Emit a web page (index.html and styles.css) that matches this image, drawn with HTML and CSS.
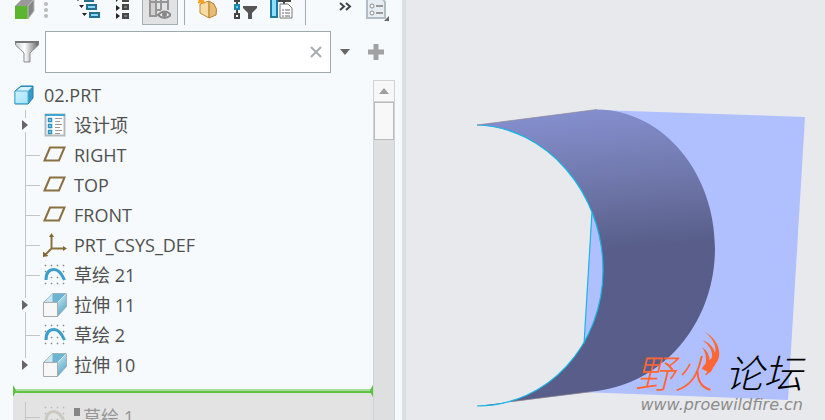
FILE: index.html
```html
<!DOCTYPE html>
<html lang="zh-CN">
<head>
<meta charset="utf-8">
<title>02.PRT</title>
<link rel="stylesheet" href="styles.css">
</head>
<body>
<svg class="defs" aria-hidden="true">
  <defs>
    <linearGradient id="ice" x1="0" y1="0" x2="1" y2="1"><stop offset="0" stop-color="#cdf1ff"/><stop offset="1" stop-color="#a5e4fd"/></linearGradient>
    <linearGradient id="glass" x1="0" y1="0" x2="1" y2="1"><stop offset="0" stop-color="#4ba3c8"/><stop offset=".5" stop-color="#a9d6e8"/><stop offset="1" stop-color="#4299c0"/></linearGradient>
    <linearGradient id="steel" x1="0" x2="1"><stop offset="0" stop-color="#ccc"/><stop offset=".4" stop-color="#fff"/><stop offset="1" stop-color="#666"/></linearGradient>
    <symbol id="plane" viewBox="0 0 24 24"><path d="M1.500 17.500L7 4.500H21.500L16 17.500Z" fill="none" stroke="#8a7040" stroke-width="2"/></symbol>
    <symbol id="sketch" viewBox="0 0 24 24">
      <g fill="currentColor"><path d="M2 2h1v1H2zM8 2h1v1H8zM14 2h1v1h-1zM20 2h1v1h-1zM2 8h1v1H2zM20 8h1v1h-1zM8 14h1v1H8zM14 14h1v1h-1zM2 20h1v1H2zM8 20h1v1H8zM14 20h1v1h-1zM20 20h1v1h-1z" stroke="currentColor" stroke-width=".6"/></g>
      <path class="curve" d="M3 17C3 9 7 6.500 11 6.500S18 9 21.500 17" fill="none" stroke-width="3"/>
    </symbol>
    <symbol id="extrude" viewBox="0 0 24 24">
      <path d="M.500 9.500L9.500.500H23.500V13.500L14.500 23.500Z" fill="url(#glass)" stroke="#9bb3bd"/>
      <path d="M9.500 1L23 1L14.500 9.500H2Z" fill="#6bb4d2"/>
      <path d="M1 9.500L9.500.500V9.500Z" fill="#c9e6f1"/>
      <path d="M14.500 9.500L23.500.500" stroke="#d6e9f0" fill="none"/>
      <path d="M.500 9.500H14.500V23.500H.500Z" fill="#f7f7f7" stroke="#aaa"/>
    </symbol>
  </defs>
</svg>
<div class="app">
  <aside class="panel">
    <div class="toolbar">
      <div class="group">
        <button class="tool" aria-label="模型"><svg width="22" height="20"><path d="M1 6L8-1H20L14 6Z" fill="#999"/><path d="M14 6L20-1V11L14 19Z" fill="#858585"/><path d="M1 6H14V19H1Z" fill="#5cb531"/><path d="M14 6L20-1V11L14 19Z" fill="none" stroke="#bbb"/></svg></button>
        <svg class="grip" width="4" height="20"><g fill="#b9bbbc"><circle cx="2" cy="4" r="2"/><circle cx="2" cy="10" r="2"/><circle cx="2" cy="16" r="2"/></g></svg>
      </div>
      <div class="group tree-tools">
        <button class="tool" aria-label="展开"><svg width="32" height="20"><path d="M0-1h4L2 1zM3 5h5L5.500 8zM6 13h5L8.500 16z" fill="#222"/><g fill="#84d8f7" stroke="#256f91" stroke-width="2"><path d="M9-4h8v5H9zM11 5h9v4h-9zM14 13h9v4h-9z"/></g></svg></button>
        <button class="tool" aria-label="折叠"><svg width="18" height="20"><path d="M0-1h3L0 2zM0 5l4 3-4 3zM0 13l4 3-4 3z" fill="#222"/><g fill="#777" stroke="#484848" stroke-width="2"><path d="M7-3h5v4H7zM7 5h5v4H7zM7 14h5v4H7z"/></g></svg></button>
        <button class="tool pressed" aria-label="树列" aria-pressed="true"><svg width="22" height="20"><path d="M1-2V16H7V-2M7 2H1M12-2V10M19-2V10M7 2H19M7 10H12" fill="#d1d1d1" stroke="#969696" stroke-width="2"/><path d="M9 15Q15.500 8 22 15Q15.500 21 9 15Z" fill="#eee" stroke="#888" stroke-width="2"/><circle cx="15.500" cy="14.500" r="2.500" fill="#888"/></svg></button>
      </div>
      <div class="group ruled">
        <button class="tool" aria-label="新建"><svg width="28" height="20"><path d="M2 4L11 1V18L2 13Z" fill="#f7dba5" stroke="#c28b31"/><path d="M11 1L16 4Q20 9 18 15L11 18Z" fill="#e6bd73" stroke="#b98432"/><path d="M4-2V3M0 3L8-2M0-1L7 3" stroke="#ff9d13" stroke-width="2"/></svg></button>
        <button class="tool" aria-label="树过滤器"><svg width="28" height="20"><path d="M3-2V18" stroke="#444" stroke-width="2"/><path d="M1-3h4v4H1zM1 14h4v4H1z" fill="#fff" stroke="#444" stroke-width="2"/><path d="M1 5h4v4H1z" fill="#66ccf2" stroke="#1786b2" stroke-width="2"/><path d="M9 6H23V8L18 13V19H14V13L9 8Z" fill="#555"/></svg></button>
        <button class="tool" aria-label="列显示"><svg width="28" height="20"><path d="M1-2h6v19H1z" fill="#8cdefa" stroke="#217a9f" stroke-width="2"/><path d="M8 1H20V-2M14-2V4" fill="none" stroke="#444" stroke-width="2"/><path d="M10 4H18L22 8V18H10Z" fill="#fff" stroke="#777"/><path d="M12 10h2M15 10h5M12 13h2M15 13h5M12 16h2M15 16h5" stroke="#666"/></svg></button>
      </div>
      <button class="tool more" aria-label="更多"><svg width="16" height="20"><path d="M2 3L6 6.500L2 10M8 3L12 6.500L8 10" fill="none" stroke="#444" stroke-width="2"/></svg></button>
      <button class="tool settings" aria-label="设置"><svg width="26" height="20"><path d="M1-2H16L19 2V18H1Z" fill="#e6eef3" stroke="#b2bdc3" stroke-width="2"/><g fill="#fff" stroke="#888"><circle cx="6" cy="6" r="2"/><circle cx="6" cy="13" r="2"/></g><path d="M10 6h7M10 13h7" stroke="#999" stroke-width="2"/></svg><svg class="corner" width="5" height="5"><path d="M5 0V5H0Z" fill="#666"/></svg></button>
    </div>
    <form class="filter">
      <svg class="funnel" width="24" height="22"><path d="M.500 1V4L9 12V21H15V12L23.500 4V1Z" fill="url(#steel)" stroke="#8a8a8a"/><path d="M0 1H24" stroke="#777" stroke-width="2"/></svg>
      <div class="field">
        <input type="text" aria-label="过滤">
        <button type="button" class="tool" aria-label="清除"><svg width="12" height="12"><path d="M1 1L11 11M11 1L1 11" stroke="#a9abac" stroke-width="2"/></svg></button>
      </div>
      <button type="button" class="tool drop" aria-label="选项"><svg width="10" height="6"><path d="M0 0H10L5 6Z" fill="#666"/></svg></button>
      <button type="button" class="tool" aria-label="添加"><svg width="18" height="18"><path d="M9 1V17M1 9H17" stroke="#a0a2a3" stroke-width="5"/></svg></button>
    </form>
    <div class="browser">
      <div class="tree">
        <div class="root"><svg width="20" height="20"><path d="M1 6L7 1H19V13L14 19H1Z" fill="#3a9ac6" stroke="#1e7fae"/><path d="M2 6L7 2H18L14 6Z" fill="#d9f4ff"/><path d="M1 6H14V18.500H1Z" fill="url(#ice)" stroke="#48b0dc"/></svg><span>02.PRT</span></div>
        <ul class="nodes">
          <li><button class="branch open" aria-label="展开设计项"></button><svg class="icon" viewBox="0 0 24 24"><path d="M2.500 1.500h19v21h-19z" fill="#fff" stroke="#b5b9bb" stroke-width="2"/><path d="M2 2h20" stroke="#3ba8d0" stroke-width="2"/><path d="M5.500 5.500h3v3h-3zM5.500 11.500h3v3h-3zM5.500 17.500h3v3h-3z" fill="#b5e7fa" stroke="#2a93bd" stroke-width="1.500"/><path d="M12 5.500h7M12 8.500h5M12 11.500h7M12 14.500h5M12 17.500h7M12 20.500h5" stroke="#999"/></svg><span>设计项</span></li>
          <li><i class="branch"></i><svg class="icon"><use href="#plane"/></svg><span>RIGHT</span></li>
          <li><i class="branch"></i><svg class="icon"><use href="#plane"/></svg><span>TOP</span></li>
          <li><i class="branch"></i><svg class="icon"><use href="#plane"/></svg><span>FRONT</span></li>
          <li><i class="branch"></i><svg class="icon" viewBox="0 0 24 24"><path d="M8.500 3V15.500H21M8.500 15.500L2 22" fill="none" stroke="#8a7040" stroke-width="2"/><path d="M8.500 0L11 4H6ZM24 15.500L20 13V18ZM0 24V18.500L5.500 23Z" fill="#806630"/></svg><span>PRT_CSYS_DEF</span></li>
          <li><i class="branch"></i><svg class="icon"><use href="#sketch"/></svg><span>草绘 21</span></li>
          <li><button class="branch open" aria-label="展开拉伸 11"></button><svg class="icon"><use href="#extrude"/></svg><span>拉伸 11</span></li>
          <li><i class="branch"></i><svg class="icon"><use href="#sketch"/></svg><span>草绘 2</span></li>
          <li><button class="branch open last" aria-label="展开拉伸 10"></button><svg class="icon"><use href="#extrude"/></svg><span>拉伸 10</span></li>
        </ul>
        <div class="insert"><svg width="3" height="12"><path d="M0 0L3 5V7L0 12Z" fill="#5fc341"/></svg><svg width="3" height="12"><path d="M3 0L0 5V7L3 12Z" fill="#5fc341"/></svg></div>
        <ul class="nodes suppressed">
          <li><i class="branch"></i><svg class="icon"><use href="#sketch"/></svg><i class="mark"></i><span>草绘 1</span></li>
        </ul>
      </div>
      <div class="scroll">
        <button class="tool up" aria-label="向上滚动"><svg width="10" height="6"><path d="M5 0L10 6H0Z" fill="#a0a0a0"/></svg></button>
        <div class="thumb"></div>
      </div>
    </div>
  </aside>
  <main class="view">
    <svg class="model" viewBox="406 0 419 420" preserveAspectRatio="xMinYMin meet" role="img" aria-label="拉伸曲面">
      <defs><linearGradient id="skin" gradientUnits="userSpaceOnUse" x1="590" y1="108" x2="602" y2="250"><stop offset="0" stop-color="#858fcf"/><stop offset=".25" stop-color="#7b84bd"/><stop offset=".6" stop-color="#6c74a6"/><stop offset="1" stop-color="#585e89"/></linearGradient></defs>
      <path d="M598 110L805 117L788 400L581 392Z" fill="#b0c0ff"/>
      <path d="M477 125L597 109.500C664 110 715 174 715 248C715 322 665 382 597 391L477 406C548 406 603 345 603 270C603 192 546 127 477 125Z" fill="url(#skin)"/>
      <path d="M477 125C546 127 603 192 603 270C603 345 548 406 477 406M592 212L584 344" fill="none" stroke="#18b5e6" stroke-width="1.200"/>
      <path d="M477 125L597 109.500M512 401.500L593 391.500" stroke="#8b8795" stroke-width=".7"/>
    </svg>
    <div class="brand">
      <div class="name"><span class="fire">野火</span><svg class="flame" width="20" height="42" viewBox="0 0 20 42"><path d="M5 0C16 6 22 18 18 28C15 34 11 35 10 41L2 37C3 32 10 30 12 25C13 18 8 12 2 8C10 11 14 16 15 21C17 13 12 6 5 0Z" fill="#ff6633"/><path d="M2 15C8 19 11 26 9 33L4 38C7 30 7 22 2 15Z" fill="#ff6633"/><path d="M9 28L18 25L11 40L3 36Z" fill="#ff6633"/></svg><span>论坛</span></div>
      <div class="site">www.proewildfire.cn</div>
    </div>
  </main>
</div>
</body>
</html>
```
FILE: styles.css
```css
* { box-sizing: border-box; }
body {
  margin: 0;
  background: #e8e9ed;
  color: #505050;
  font: 18px/30px "Open Sans", "Noto Sans CJK SC", sans-serif;
}
svg { display: block; flex: none; }
ul { list-style: none; margin: 0; padding: 0; }
.defs { position: absolute; width: 0; height: 0; }
.app {
  display: grid;
  grid-template-columns: 406px minmax(0, 1fr);
  height: 100vh;
  overflow: hidden;
}
.panel {
  display: flex;
  flex-direction: column;
  min-height: 0;
  background: #f6fafc;
  border-right: 4px solid #d8e0e0;
}
.tool { display: block; border: 0; padding: 0; background: none; }

.toolbar { display: flex; height: 25px; padding-left: 14px; }
.group { display: flex; gap: 8px; }
.tree-tools { margin-left: 28px; }
.pressed {
  width: 36px;
  padding-left: 6px;
  background: #e0e2e4;
  border: 1px solid #a5b0b3;
  border-top: 0;
}
.ruled {
  margin-left: 6px;
  padding: 0 7px 0 13px;
  border: solid #a5abad;
  border-width: 0 1px;
}
.more { margin-left: 32px; }
.settings { position: relative; margin-left: 12px; }
.corner { position: absolute; right: 3px; bottom: 4px; }
.toolbar .tool { align-self: stretch; padding-bottom: 5px; }

.filter { display: flex; align-items: center; margin-top: 6px; padding-left: 15px; }
.field {
  display: flex;
  align-items: center;
  width: 286px;
  height: 42px;
  margin-left: 6px;
  padding-right: 8px;
  background: #fff;
  border: 1px solid #9eabac;
}
.field input {
  flex: 1;
  min-width: 0;
  height: 100%;
  border: 0;
  padding: 0 8px;
  background: none;
  font: inherit;
  outline: 0;
}
.drop { margin: 0 17px 0 9px; }

.browser { display: flex; flex: 1; min-height: 0; margin-top: 7px; padding: 0 7px 0 13px; }
.tree { flex: 1; min-width: 0; overflow: hidden; }
.root { display: flex; align-items: center; gap: 10px; padding-left: 1px; }
.nodes li { display: flex; align-items: center; height: 30px; }
.branch {
  width: 30px;
  height: 30px;
  border: 0;
  padding: 0;
  background:
    linear-gradient(#c2c4c5, #c2c4c5) 12px 0 / 1px 30px no-repeat,
    linear-gradient(#c2c4c5, #c2c4c5) 12px 15px / 15px 1px no-repeat;
}
.branch.open {
  display: flex;
  align-items: center;
  padding-left: 9px;
  background:
    linear-gradient(#c2c4c5, #c2c4c5) 12px 0 / 1px 8px no-repeat,
    linear-gradient(#c2c4c5, #c2c4c5) 12px 22px / 1px 8px no-repeat;
}
.branch.last { background: linear-gradient(#c2c4c5, #c2c4c5) 12px 0 / 1px 8px no-repeat; }
.branch.open::before {
  content: "";
  border: solid transparent;
  border-width: 5px 0 5px 6px;
  border-left-color: #666;
}
.icon { width: 24px; height: 24px; margin-right: 7px; color: #8c8c8c; }
.curve { stroke: var(--curve, #3a9fca); }
.insert {
  display: flex;
  align-items: center;
  justify-content: space-between;
  margin-top: 5px;
  background: linear-gradient(#a9dca0 50%, #5fc341 50%) 0 4px / 100% 4px no-repeat;
}
.suppressed {
  --curve: #cbc8c1;
  margin-top: -4px;
  padding-top: 9px;
  background: #e3e3e3;
  border-top-left-radius: 6px;
  color: #969696;
}
.suppressed .icon { color: #bbb; }
.mark { width: 6px; height: 8px; margin: 0 3px 10px 0; background: #858585; }

.scroll { width: 22px; background: #dedfe1; border: solid #d0d2d4; border-width: 0 1px; }
.up {
  display: grid;
  place-items: center;
  width: 100%;
  height: 22px;
  background: #f8f8f8;
  border: solid #d0d2d4;
  border-width: 1px 0;
}
.thumb { height: 38px; background: #f8f8f8; border: 1px solid #b9bbbd; }

.view { position: relative; min-width: 0; overflow: hidden; }
.model { width: 100%; height: 100%; }
.brand { position: absolute; right: 22px; bottom: 6px; }
.name {
  display: flex;
  margin: 0 0 3px -5px;
  color: #000;
  font: italic 300 39px/44px "Noto Sans CJK SC", sans-serif;
}
.fire { color: #ff6633; }
.flame { margin: -17px 4px 0 -13px; }
.site { color: #8c8c8c; font: oblique 16px/18px "DejaVu Sans", sans-serif; }
```
